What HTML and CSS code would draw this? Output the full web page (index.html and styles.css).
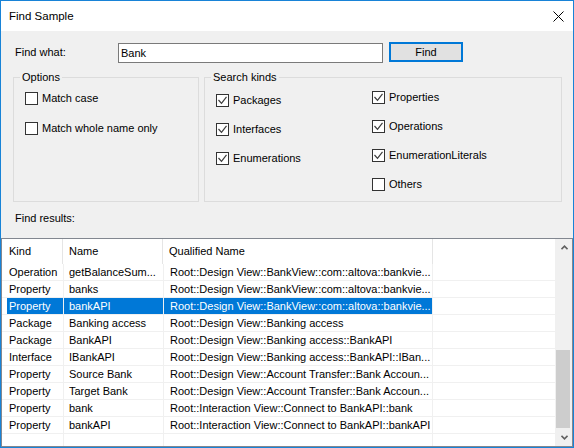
FILE: index.html
```html
<!DOCTYPE html>
<html lang="en">
<head>
  <meta charset="UTF-8" />
  <title>Find Sample</title>
  <link rel="stylesheet" href="styles.css">
</head>
<body>
  <div class="window">
    <!-- Title bar -->
    <div class="titlebar">
      <span class="title">Find Sample</span>
      <svg class="close" width="11" height="11" viewBox="0 0 11 11">
        <path d="M0.5 0.5L10.5 10.5M10.5 0.5L0.5 10.5" stroke="#000" stroke-width="1" fill="none"/>
      </svg>
    </div>

    <div class="client">
      <div class="panel">
        <!-- Search text -->
        <div class="find-row">
          <span class="find-label">Find what:</span>
          <div class="textbox">Bank</div>
          <button class="find-btn">Find</button>
        </div>

        <!-- Group boxes -->
        <div class="groups">
          <div class="group options">
            <div class="group-title">Options</div>
            <div class="group-body options-body">
              <div class="check"><span class="box"></span>Match case</div>
              <div class="check"><span class="box"></span>Match whole name only</div>
            </div>
          </div>

          <div class="group kinds">
            <div class="group-title">Search kinds</div>
            <div class="group-body kinds-body">
              <div class="kinds-col left">
                <div class="check"><span class="box checked"></span>Packages</div>
                <div class="check"><span class="box checked"></span>Interfaces</div>
                <div class="check"><span class="box checked"></span>Enumerations</div>
              </div>
              <div class="kinds-col right">
                <div class="check"><span class="box checked"></span>Properties</div>
                <div class="check"><span class="box checked"></span>Operations</div>
                <div class="check"><span class="box checked"></span>EnumerationLiterals</div>
                <div class="check"><span class="box"></span>Others</div>
              </div>
            </div>
          </div>
        </div>

        <div class="results-label">Find results:</div>
      </div>

      <!-- Results list -->
      <div class="listview">
        <div class="grid">
          <div class="header">
            <div class="hcell">Kind</div>
            <div class="hcell">Name</div>
            <div class="hcell">Qualified Name</div>
            <div class="hcell last"></div>
          </div>
          <div id="rows"></div>
          <div class="row filler">
            <div class="cell"></div><div class="cell"></div><div class="cell"></div><div class="cell last"></div>
          </div>
        </div>
        <div class="scrollbar">
          <div class="sb-btn">
            <svg width="7" height="5" viewBox="0 0 7 5"><path d="M0.5 4.2L3.5 1.2L6.5 4.2" stroke="#606060" stroke-width="1.6" fill="none"/></svg>
          </div>
          <div class="sb-track"><div class="sb-thumb"></div></div>
          <div class="sb-btn">
            <svg width="7" height="5" viewBox="0 0 7 5"><path d="M0.5 0.8L3.5 3.8L6.5 0.8" stroke="#606060" stroke-width="1.6" fill="none"/></svg>
          </div>
        </div>
      </div>
    </div>
  </div>

  <script>
    // Check marks for the ticked boxes
    document.querySelectorAll('.box.checked').forEach(function (box) {
      box.innerHTML = '<svg width="11" height="11" viewBox="0 0 11 11">' +
        '<path d="M1.5 5L4.5 8.3L9.5 1.8" stroke="#3c3c3c" stroke-width="1.2" fill="none"/></svg>';
    });

    // Result rows
    const results = [
      ['Operation', 'getBalanceSum...', 'Root::Design View::BankView::com::altova::bankvie...'],
      ['Property', 'banks', 'Root::Design View::BankView::com::altova::bankvie...'],
      ['Property', 'bankAPI', 'Root::Design View::BankView::com::altova::bankvie...', true],
      ['Package', 'Banking access', 'Root::Design View::Banking access'],
      ['Package', 'BankAPI', 'Root::Design View::Banking access::BankAPI'],
      ['Interface', 'IBankAPI', 'Root::Design View::Banking access::BankAPI::IBan...'],
      ['Property', 'Source Bank', 'Root::Design View::Account Transfer::Bank Accoun...'],
      ['Property', 'Target Bank', 'Root::Design View::Account Transfer::Bank Accoun...'],
      ['Property', 'bank', 'Root::Interaction View::Connect to BankAPI::bank'],
      ['Property', 'bankAPI', 'Root::Interaction View::Connect to BankAPI::bankAPI']
    ];

    const rows = document.getElementById('rows');
    results.forEach(function (r) {
      const row = document.createElement('div');
      row.className = r[3] ? 'row selected' : 'row';
      for (let i = 0; i < 3; i++) {
        const cell = document.createElement('div');
        cell.className = 'cell';
        cell.textContent = r[i];
        row.appendChild(cell);
      }
      const rest = document.createElement('div');
      rest.className = 'cell last';
      row.appendChild(rest);
      rows.appendChild(row);
    });
  </script>
</body>
</html>
```

FILE: styles.css
```css
/* General */
* {
  box-sizing: border-box;
}

body {
  margin: 0;
  background: #ffffff;
  font-family: "Liberation Sans", Arial, sans-serif;
  font-size: 11px;
  color: #000000;
}

.window {
  width: 574px;
  height: 448px;
  border: 1px solid #1883d7;
  background: #f0f0f0;
  display: flex;
  flex-direction: column;
}

/* Title bar */
.titlebar {
  flex: none;
  height: 30px;
  background: #ffffff;
  display: flex;
  align-items: center;
  justify-content: space-between;
  padding: 0 9px 0 8px;
  font-size: 11.5px;
}

.close {
  display: block;
}

/* Client area */
.client {
  flex: 1;
  display: flex;
  flex-direction: column;
}

.panel {
  padding: 11px 11px 0 12px;
}

.find-row {
  display: flex;
  align-items: flex-start;
  height: 21px;
}

.find-label {
  width: 103px;
  margin-left: 2px;
  line-height: 20px;
}

.textbox {
  width: 265px;
  height: 20px;
  margin-top: 1px;
  border: 1px solid #7a7a7a;
  background: #ffffff;
  padding-left: 2px;
  line-height: 18px;
}

.find-btn {
  width: 74px;
  height: 20px;
  margin-left: 6px;
  padding: 0;
  border: 2px solid #0078d7;
  background: #e1e1e1;
  font-family: inherit;
  font-size: 11px;
  color: #000000;
}

/* Group boxes */
.groups {
  display: flex;
  gap: 5px;
  margin-top: 14px;
}

.group {
  height: 125px;
  border: 1px solid #dcdcdc;
}

.options {
  width: 186px;
}

.kinds {
  width: 358px;
}

.group-title {
  width: fit-content;
  margin: -8px 0 0 6px;
  padding: 0 2px;
  background: #f0f0f0;
  line-height: 15px;
}

.group-body {
  padding-left: 11px;
}

.options-body {
  display: flex;
  flex-direction: column;
  gap: 15px;
  padding-top: 6px;
}

.kinds-body {
  display: flex;
  align-items: flex-start;
}

.kinds-col {
  display: flex;
  flex-direction: column;
  gap: 14px;
}

.kinds-col.left {
  width: 156px;
  padding-top: 8px;
}

.kinds-col.right {
  padding-top: 5px;
}

.check {
  display: flex;
  align-items: center;
  gap: 4px;
  height: 15px;
  line-height: 15px;
  white-space: nowrap;
}

.box {
  width: 13px;
  height: 13px;
  border: 1px solid #333333;
  background: #ffffff;
  flex: none;
}

.box svg {
  display: block;
}

.results-label {
  margin: 9px 0 0 2px;
  line-height: 15px;
}

/* Results list */
.listview {
  flex: 1;
  margin-top: 12px;
  border: 1px solid #828790;
  background: #ffffff;
  display: flex;
}

.grid {
  flex: 1;
  display: flex;
  flex-direction: column;
}

.header {
  display: grid;
  grid-template-columns: 61px 100px 270px 1fr;
  height: 25px;
}

.hcell {
  border-right: 1px solid #e5e5e5;
  line-height: 25px;
  padding-left: 6px;
  white-space: nowrap;
}

.hcell:first-child {
  padding-left: 7px;
}

.hcell.last,
.cell.last {
  border-right: none;
}

.row {
  display: grid;
  grid-template-columns: 62px 100px 269px 1fr;
  height: 17px;
  border-bottom: 1px solid #f0f0f0;
}

.cell {
  border-right: 1px solid #f0f0f0;
  line-height: 16px;
  padding-left: 6px;
  white-space: nowrap;
  overflow: hidden;
}

.cell:first-child {
  padding-left: 7px;
}

.cell:nth-child(2) {
  padding-left: 5px;
}

.row.selected .cell {
  background: #0078d7;
  color: #ffffff;
}

.row.selected .cell:first-child {
  background: linear-gradient(to right, #ffffff 5px, #0078d7 5px);
}

.row.selected .cell.last {
  background: #ffffff;
}

.row.filler {
  flex: 1;
  height: auto;
  border-bottom: none;
}

/* Scrollbar */
.scrollbar {
  width: 17px;
  flex: none;
  background: #f0f0f0;
  display: flex;
  flex-direction: column;
}

.sb-btn {
  height: 17px;
  display: flex;
  align-items: center;
  justify-content: center;
  padding-left: 1px;
}

.sb-btn svg {
  display: block;
}

.sb-track {
  flex: 1;
}

.sb-thumb {
  height: 78px;
  margin: 94px 2px 0 1px;
  background: #cdcdcd;
}
```
